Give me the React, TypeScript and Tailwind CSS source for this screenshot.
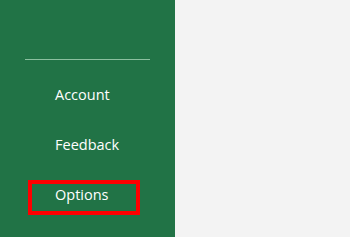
export default function App() {
  const items = ["Account", "Feedback", "Options"];
  return (
    <div
      className="flex h-[237px] w-[350px] bg-[#f3f3f3]"
      style={{ fontFamily: '"Open Sans", "Noto Sans", sans-serif' }}
    >
      <aside className="w-[175px] shrink-0 bg-[#217346] pt-[59px]">
        <div className="mx-[25px] h-px bg-[#8bbf9f]" />
        <ul className="mt-[10px] flex flex-col">
          {items.map((label) => (
            <li key={label} className="relative flex h-[50px] items-center pl-[55px] text-[14.5px] text-white">
              {label}
              {label === "Options" && (
                <span className="absolute left-[28px] top-[10px] h-[35px] w-[112px] border-4 border-[#ff0000]" />
              )}
            </li>
          ))}
        </ul>
      </aside>
      <main className="flex-1" />
    </div>
  );
}
